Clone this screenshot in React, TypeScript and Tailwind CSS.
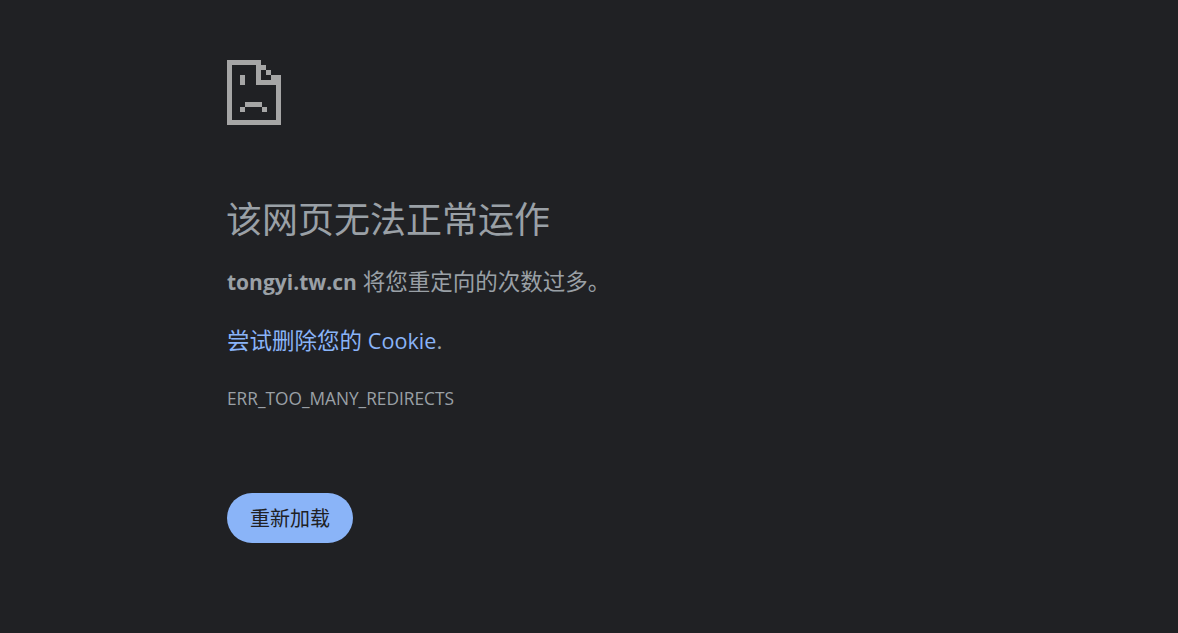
const SadIcon = () => (
  <svg width="54" height="65" viewBox="0 0 54 65" fill="#a6a6a6" className="block">
    <rect x="0" y="0" width="34" height="5" />
    <rect x="0" y="0" width="5" height="65" />
    <rect x="0" y="60" width="54" height="5" />
    <rect x="49" y="15" width="5" height="50" />
    <rect x="29" y="0" width="5" height="25" />
    <rect x="29" y="20" width="25" height="5" />
    <rect x="34" y="5" width="5" height="5" />
    <rect x="39" y="10" width="5" height="5" />
    <rect x="44" y="15" width="5" height="5" />
    <rect x="13" y="15" width="5" height="10" />
    <rect x="13" y="47" width="5" height="5" />
    <rect x="18" y="42" width="17" height="5" />
    <rect x="35" y="47" width="5" height="5" />
  </svg>
);

const font = "font-['Open_Sans','Noto_Sans_CJK_SC',sans-serif]";

export default function App() {
  return (
    <div className={`min-h-[633px] bg-[#202124] pl-[227px] pt-[60px] ${font}`}>
      <SadIcon />
      <h1 className="-ml-[1px] mt-[69px] text-[36px] leading-[52px] font-normal text-[#9aa0a6]">
        该网页无法正常运作
      </h1>
      <p className="mt-[20px] text-[22.5px] leading-[32px] text-[#9aa0a6]">
        <strong className="text-[21px] font-bold">tongyi.tw.cn</strong> 将您重定向的次数过多。
      </p>
      <p className="mt-[27px] text-[22.5px] leading-[32px] text-[#9aa0a6]">
        <a className="text-[#8ab4f8]">
          尝试删除您的 <span className="text-[21.6px]">Cookie</span>
        </a>
        .
      </p>
      <div className="mt-[30px] text-[17.3px] leading-[24px] text-[#9aa0a6]">ERR_TOO_MANY_REDIRECTS</div>
      <button className="mt-[82px] flex h-[50px] w-[126px] items-center justify-center rounded-[25px] bg-[#8ab4f8] pt-[2px] text-[20px] text-[#202124]">
        重新加载
      </button>
    </div>
  );
}
